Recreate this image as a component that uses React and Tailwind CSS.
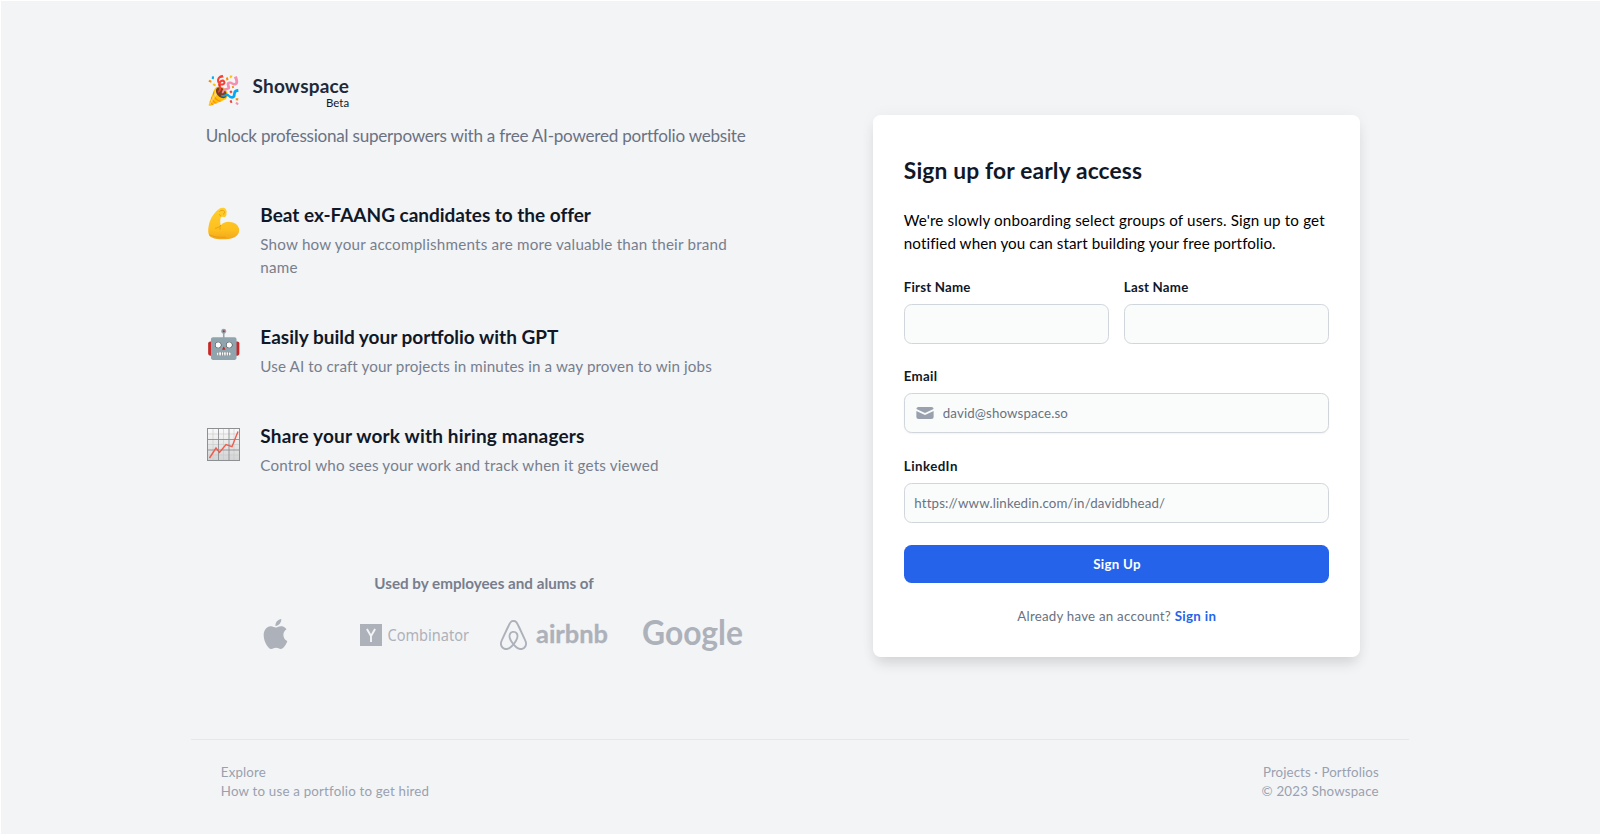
import { SiAirbnb, SiApple } from "react-icons/si";

function BicepsIcon() {
  return (
    <svg className="size-[33px]" viewBox="0 0 33 33">
      <defs>
        <linearGradient id="skin" x1="0" y1="0" x2="0" y2="1">
          <stop offset="0" stopColor="#ffcf2e" />
          <stop offset="0.7" stopColor="#fdbf1e" />
          <stop offset="1" stopColor="#f2a71c" />
        </linearGradient>
      </defs>
      <path
        d="M12.6 1.6C14.2.4 17.4.2 18.7 2c1.3 1.6.9 4.2.6 6.3-.3 1.5-1.5 1.9-2.8 1.7-1-.1-1.7-.5-2.4-.8-.9 2.7-1.2 5.8-.4 9.2 2-2.5 5.3-3.8 9-3.5 5.6.4 9.6 3.8 9.5 8.4-.1 5.6-5.6 8.9-13.5 9-6.9.1-13.6-.5-16-3.3C.5 26.5 1 20.3 2.700 14.800 4.500 9.200 8.300 4.800 12.600 1.600z"
        fill="url(#skin)"
      />
      <path
        d="M12.8 4.2c1.6-1.3 3.8-1.2 4.6.3.5 1.1.1 2.3-.9 2.6M14.1 9.200c-.9-.4-1.300-1-1.600-1.800M13.700 18.400c-1.500 1.800-3.400 2.700-5.300 2.900M13.700 18.400c-.8 1.400-.9 2.700-.7 4M2.500 28c4 2 10 2.600 16 2.200"
        fill="none"
        stroke="#e59a12"
        strokeWidth="0.9"
        strokeLinecap="round"
      />
    </svg>
  );
}

function ChartIcon() {
  return (
    <svg className="size-[33px]" viewBox="0 0 33 33">
      <defs>
        <linearGradient id="paper" x1="0" y1="0" x2="0" y2="1">
          <stop offset="0" stopColor="#fafafa" />
          <stop offset="1" stopColor="#d2d3d4" />
        </linearGradient>
      </defs>
      <rect x="0.5" y="0.5" width="32" height="32" fill="url(#paper)" stroke="#8d9093" />
      <path d="M6 1v31M16.5 1v31M27 1v31M1 6h31M1 16.5h31M1 27h31" stroke="#c6c8ca" strokeWidth="0.6" />
      <path d="M11.5 1v31M22 1v31M1 11.5h31M1 22h31" stroke="#8d9093" strokeWidth="0.9" />
      <path d="M2.5 30L9 20l3.5 4.5L19 16.5l6 2.2L31 3.5" fill="none" stroke="#ef5b4c" strokeWidth="1.4" />
    </svg>
  );
}

const features = [
  {
    icon: <BicepsIcon />,
    title: "Beat ex-FAANG candidates to the offer",
    lines: ["Show how your accomplishments are more valuable than their brand", "name"],
    titleTracking: "tracking-[-0.02px]",
    textTracking: "tracking-[0.21px]",
  },
  {
    icon: <span className="-ml-[1px] -mt-[1.5px] block w-[38px] text-[28.5px] leading-[33px]">🤖</span>,
    title: "Easily build your portfolio with GPT",
    lines: ["Use AI to craft your projects in minutes in a way proven to win jobs"],
    titleTracking: "tracking-[0px]",
    textTracking: "tracking-[0.11px]",
  },
  {
    icon: <ChartIcon />,
    title: "Share your work with hiring managers",
    lines: ["Control who sees your work and track when it gets viewed"],
    titleTracking: "tracking-[0.17px]",
    textTracking: "tracking-[0.18px]",
  },
];

function Feature({ icon, title, lines, titleTracking, textTracking }) {
  return (
    <li className="flex">
      <div className="w-[54.5px] shrink-0 pl-px pt-[5px]">{icon}</div>
      <div>
        <h3 className={`h-[31px] text-[19px] font-bold leading-[26.6px] text-gray-900 ${titleTracking}`}>{title}</h3>
        <p className={`text-[15.2px] leading-[22.8px] text-gray-500 opacity-90 ${textTracking}`}>
          {lines.map((line) => (
            <span key={line} className="block whitespace-nowrap">{line}</span>
          ))}
        </p>
      </div>
    </li>
  );
}

function Logos() {
  return (
    <div className="ml-[55px] mt-[22.5px] flex h-[40px] items-start text-[#adb1ba]">
      <SiApple className="mt-[1.5px] h-[30px] w-[29px]" preserveAspectRatio="none" />
      <svg className="ml-[70px] h-[40px] w-[112px] overflow-visible" viewBox="0 0 112 40" fill="currentColor">
        <rect x="0" y="7" width="22" height="22" />
        <path d="M6.9 12l4.1 7L15.1 12M11 19V25" fill="none" stroke="#f3f4f6" strokeWidth="1.9" />
        <text x="27.5" y="24" fontSize="15.5" fontFamily="Noto Sans, sans-serif" textLength="81.5" lengthAdjust="spacingAndGlyphs">Combinator</text>
      </svg>
      <SiAirbnb className="ml-[27px] mt-[2.5px] h-[30px] w-[29px]" preserveAspectRatio="none" />
      <svg className="ml-[8px] h-[40px] w-[76px] overflow-visible" viewBox="0 0 76 40" fill="currentColor">
        <text x="0" y="25.5" fontSize="25.5" fontWeight="700" fontFamily="Lato, sans-serif" stroke="currentColor" strokeWidth="0.3" textLength="72" lengthAdjust="spacingAndGlyphs">airbnb</text>
      </svg>
      <svg className="ml-[30px] h-[44px] w-[106px] overflow-visible" viewBox="0 0 106 44" fill="currentColor">
        <text x="0" y="28" fontSize="35" fontWeight="700" fontFamily="Lato, sans-serif" textLength="101" lengthAdjust="spacingAndGlyphs">Google</text>
      </svg>
    </div>
  );
}

const labelClass = "block h-[26.8px] pt-px text-[13.3px] font-bold leading-[19px] text-gray-900";
const inputClass =
  "block h-[40px] w-full rounded-[7.6px] border border-gray-300 bg-[#fafcfb] text-[13.3px] text-gray-900 outline-none placeholder:text-gray-500";

function SignupCard() {
  return (
    <form className="mt-[114px] flex h-[542px] w-[487px] flex-col rounded-[7.6px] bg-white px-[31px] pt-[40px] shadow-[0_9px_14px_-3px_rgba(0,0,0,0.12),0_0_16px_0_rgba(0,0,0,0.04)]">
      <h2 className="text-[22.8px] font-bold leading-[30.4px] tracking-[0.15px] text-gray-900">Sign up for early access</h2>
      <p className="mt-[23.6px] whitespace-nowrap text-[15.2px] leading-[22.8px] text-black">
        <span className="block tracking-[0.15px]">We're slowly onboarding select groups of users. Sign up to get</span>
        <span className="block tracking-[0.08px]">notified when you can start building your free portfolio.</span>
      </p>
      <div className="mt-[22.6px] grid grid-cols-2 gap-[15px]">
        <label className="block">
          <span className={`${labelClass} tracking-[0.19px]`}>First Name</span>
          <input className={`${inputClass} px-[10px]`} />
        </label>
        <label className="block">
          <span className={`${labelClass} tracking-[0.22px]`}>Last Name</span>
          <input className={`${inputClass} px-[10px]`} />
        </label>
      </div>
      <label className="mt-[22.4px] block">
        <span className={`${labelClass} tracking-[0.3px]`}>Email</span>
        <span className="flex h-[40px] items-center rounded-[7.6px] border border-gray-300 bg-[#fafcfb] pl-[10px] shadow-[0_1px_2px_0_rgba(0,0,0,0.05)]">
          <svg className="size-[20px] shrink-0 text-gray-400" viewBox="0 0 20 20" fill="currentColor">
            <path d="M2.003 5.884L10 9.882l7.997-3.998A2 2 0 0016 4H4a2 2 0 00-1.997 1.884z" transform="translate(-0.8 0) scale(1.08 1)" />
            <path d="M18 8.118l-8 4-8-4V14a2 2 0 002 2h12a2 2 0 002-2V8.118z" transform="translate(-0.8 0) scale(1.08 1)" />
          </svg>
          <input
            placeholder="david@showspace.so"
            className="ml-[8px] w-full bg-transparent pt-px text-[13.3px] tracking-[0.12px] outline-none placeholder:text-gray-500"
          />
        </span>
      </label>
      <label className="mt-[23px] block">
        <span className={`${labelClass} tracking-[0.45px]`}>LinkedIn</span>
        <input placeholder="https://www.linkedin.com/in/davidbhead/" className={`${inputClass} px-[9.5px] tracking-[0.15px]`} />
      </label>
      <button type="button" className="mt-[22.4px] h-[38px] shrink-0 rounded-[7.6px] bg-[#2563eb] pl-[1.5px] pt-px text-[13.3px] font-bold tracking-[0.27px] text-white">
        Sign Up
      </button>
      <p className="mt-[23.4px] whitespace-nowrap pl-px text-center text-[13.3px] leading-[19px] tracking-[0.23px] text-gray-500">
        Already have an account? <a className="font-bold tracking-[0.33px] text-[#2563eb]">Sign in</a>
      </p>
    </form>
  );
}

export default function App() {
  return (
    <div className="h-[834px] w-[1600px] overflow-hidden border-l border-t border-white bg-gray-100 font-['Lato',sans-serif]">
      <div className="ml-[189.8px] w-[1218px]">
        <main className="flex h-[737.5px] pl-[15px]">
          <section className="w-[667px] shrink-0 pt-[71px]">
            <div className="flex h-[36px] items-center">
              <span className="w-[46.7px] pb-[2px] text-[28.2px] leading-[34px]">🎉</span>
              <div className="flex flex-col items-end pt-[3.5px] text-gray-800">
                <span className="text-[19px] font-bold leading-[19px] tracking-[0.2px]">Showspace</span>
                <span className="mt-[2px] text-[11.4px] leading-[11.4px] tracking-[0.05px] text-gray-900">Beta</span>
              </div>
            </div>
            <p className="mt-[14.5px] whitespace-nowrap text-[17.1px] leading-[26.6px] tracking-[-0.24px] text-gray-500">
              Unlock professional superpowers with a free AI-powered portfolio website
            </p>
            <ul className="mt-[52.8px] flex flex-col gap-[45.5px]">
              {features.map((feature) => (
                <Feature key={feature.title} {...feature} />
              ))}
            </ul>
            <p className="ml-[168.5px] mt-[94.9px] text-[15.2px] font-bold leading-[22.8px] text-gray-500 opacity-90">Used by employees and alums of</p>
            <Logos />
          </section>
          <SignupCard />
        </main>
        <footer className="flex justify-between border-t border-gray-200 px-[30px] pt-[23px] text-[13.3px] leading-[19px] text-gray-400">
          <div>
            <p className="tracking-[0.16px]">Explore</p>
            <p className="tracking-[0.2px]">How to use a portfolio to get hired</p>
          </div>
          <div className="text-right">
            <p className="tracking-[0.1px]">Projects · Portfolios</p>
            <p className="tracking-[0.19px]">© 2023 Showspace</p>
          </div>
        </footer>
      </div>
    </div>
  );
}
